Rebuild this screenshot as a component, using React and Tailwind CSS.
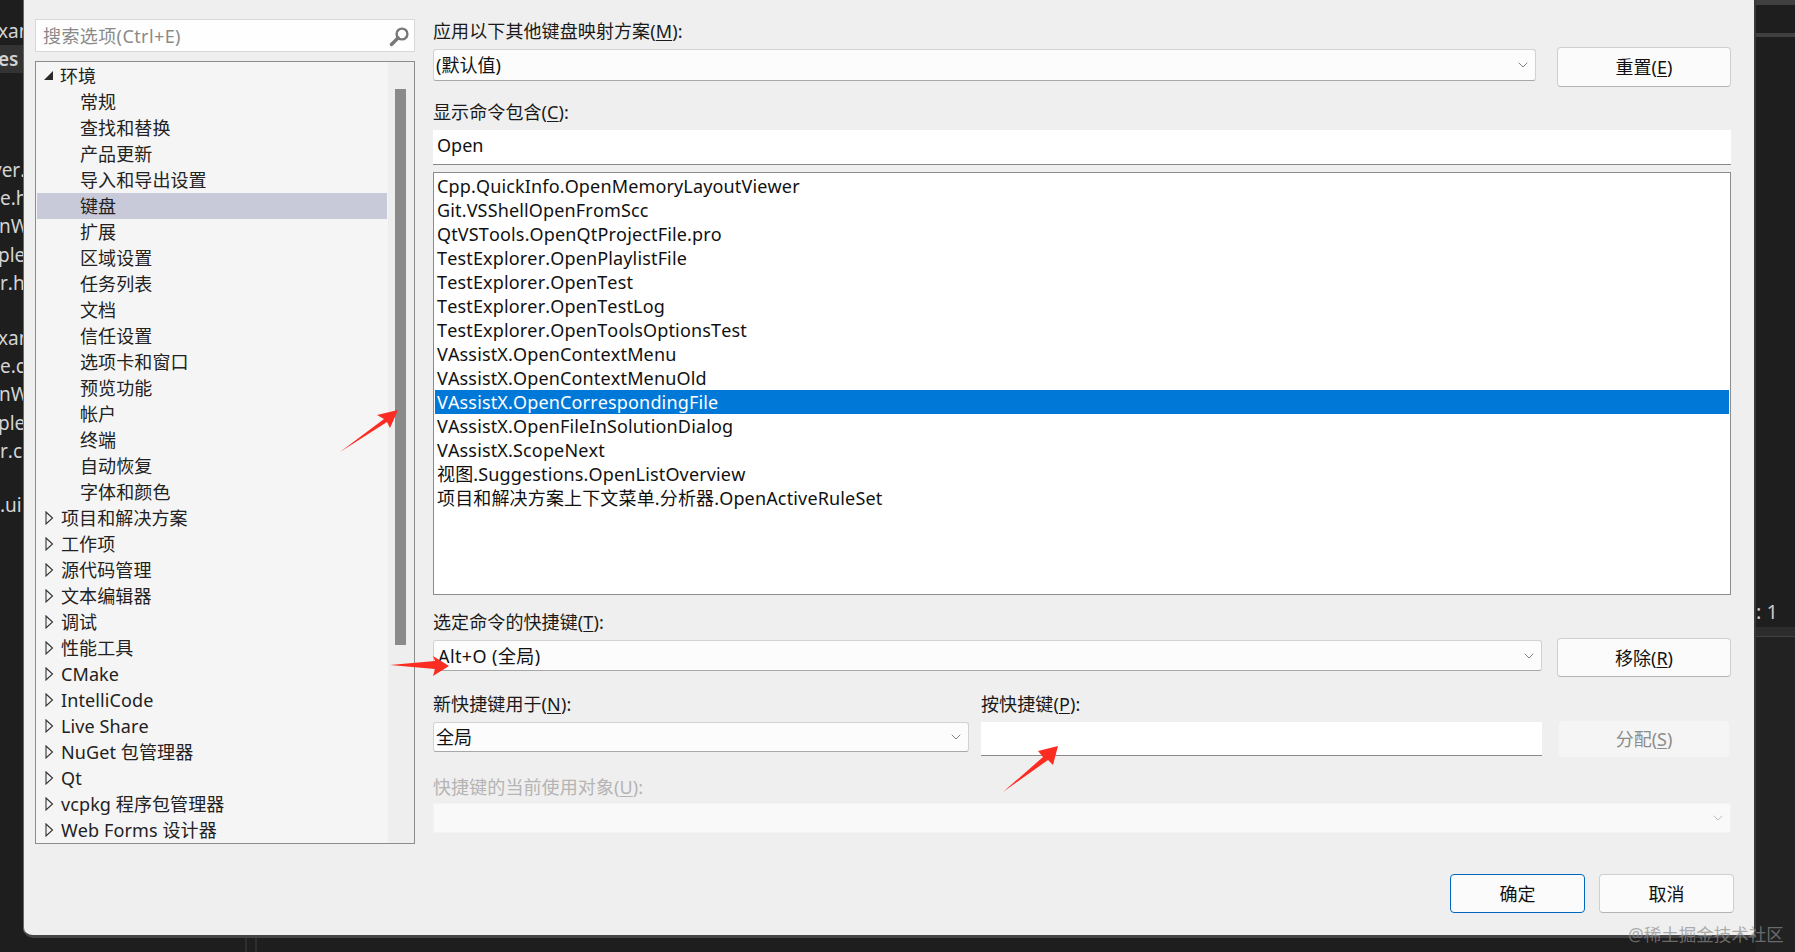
import { ChevronDown } from "lucide-react";

const treeEnv = ["常规", "查找和替换", "产品更新", "导入和导出设置", "键盘", "扩展", "区域设置", "任务列表", "文档", "信任设置", "选项卡和窗口", "预览功能", "帐户", "终端", "自动恢复", "字体和颜色"];
const treeRest = ["项目和解决方案", "工作项", "源代码管理", "文本编辑器", "调试", "性能工具", "CMake", "IntelliCode", "Live Share", "NuGet 包管理器", "Qt", "vcpkg 程序包管理器", "Web Forms 设计器"];
const commands = [
  "Cpp.QuickInfo.OpenMemoryLayoutViewer",
  "Git.VSShellOpenFromScc",
  "QtVSTools.OpenQtProjectFile.pro",
  "TestExplorer.OpenPlaylistFile",
  "TestExplorer.OpenTest",
  "TestExplorer.OpenTestLog",
  "TestExplorer.OpenToolsOptionsTest",
  "VAssistX.OpenContextMenu",
  "VAssistX.OpenContextMenuOld",
  "VAssistX.OpenCorrespondingFile",
  "VAssistX.OpenFileInSolutionDialog",
  "VAssistX.ScopeNext",
  "视图.Suggestions.OpenListOverview",
  "项目和解决方案上下文菜单.分析器.OpenActiveRuleSet",
];
// clipped file names of the editor behind the dialog
const behind = [
  { text: "xan", cls: "h-[28px] mt-[17px] -ml-[2px]" },
  { text: "es", cls: "h-[28px] -ml-[2px] bg-[#333333] font-semibold" },
  { text: "ver.", cls: "h-[28px] mt-[83px] -ml-[8px]" },
  { text: "e.h", cls: "h-[28px] ml-0" },
  { text: "nW", cls: "h-[29px] -ml-[1px]" },
  { text: "ple", cls: "h-[28px] -ml-[2px]" },
  { text: "r.h", cls: "h-[28px] ml-0" },
  { text: "xan", cls: "h-[28px] mt-[27px] -ml-[2px]" },
  { text: "e.c", cls: "h-[28px] ml-0" },
  { text: "nW", cls: "h-[29px] -ml-[1px]" },
  { text: "ple", cls: "h-[28px] -ml-[2px]" },
  { text: "r.c", cls: "h-[28px] ml-0" },
  { text: ".ui", cls: "h-[28px] mt-[26px] ml-0" },
];

const Chevron = ({ className = "text-[#555555]" }) => (
  <ChevronDown size={16} strokeWidth={1.1} className={className} />
);

const Label = ({ text, hot, after = "):", className = "text-[#1a1a1a]" }) => (
  <div className={"h-6 leading-[22px] whitespace-nowrap tracking-[0.1px] " + className}>
    {text}(<span className="underline underline-offset-2">{hot}</span>{after}
  </div>
);

const Combo = ({ value, className }) => (
  <div className={"flex items-center justify-between pl-[2px] pr-[4px] bg-[#fcfcfc] border border-[#d2d2d2] border-b-[#a8a8a8] rounded-[3px] text-[#111111] " + className}>
    <span className="whitespace-nowrap">{value}</span>
    <Chevron />
  </div>
);

const Btn = ({ children, className }) => (
  <button className={"flex items-center justify-center bg-[#fbfbfb] border border-[#cfcfcf] border-b-[#b4b4b4] rounded-[4px] text-[#111111] " + className}>
    {children}
  </button>
);

const Collapsed = () => (
  <svg width="9" height="14" viewBox="0 0 9 14" className="shrink-0">
    <path d="M1 1 L7.5 7 L1 13 Z" fill="none" stroke="#333333" strokeWidth="1.1" />
  </svg>
);

function TreeRow({ label, selected, top, children }) {
  return (
    <div className={"h-[26px] leading-[26px] flex items-center whitespace-nowrap text-[#222222] tracking-[0.1px] " + (selected ? "bg-[#c9cad9] mr-px " : "") + (top ? "pl-[8px]" : "pl-[43px]")}>
      {children}
      {top ? <span className="ml-[7px]">{label}</span> : label}
    </div>
  );
}

export default function App() {
  return (
    <div className="relative w-[1795px] h-[952px] overflow-hidden flex bg-[#1e1e1e] text-[18px] [font-kerning:none] font-['Noto_Sans','Noto_Sans_CJK_SC',sans-serif]">
      {/* editor tabs behind */}
      <div className="w-[23px] shrink-0 overflow-hidden flex flex-col text-[19px] text-[#d4d4d4]">
        {behind.map((b, i) => (
          <div key={i} className={"leading-[28px] whitespace-nowrap " + b.cls}>{b.text}</div>
        ))}
      </div>

      <div className="w-[1733px] shrink-0 flex flex-col">
        <div className="h-[938px] shrink-0 bg-[#efefef] border-l border-l-[#666666] border-r-2 border-r-[#3a3a3a] border-b-[3px] border-b-[#444444] rounded-bl-[10px] flex pl-[11px]">
          {/* left: options tree */}
          <div className="w-[380px] shrink-0 flex flex-col pt-[19px]">
            <div className="h-[33px] bg-[#fefefe] border border-[#d8d8d8] flex items-center justify-between pl-[7px] pr-[4px] pt-[2px] text-[#8a8a8a]">
              <span className="whitespace-nowrap tracking-[0.4px]">搜索选项(Ctrl+E)</span>
              <svg width="21" height="21" viewBox="0 0 21 21">
                <circle cx="13" cy="8" r="5.4" fill="none" stroke="#777777" strokeWidth="2.4" />
                <path d="M9 12 L2.5 18.5" stroke="#777777" strokeWidth="3.4" strokeLinecap="round" />
              </svg>
            </div>
            <div className="mt-[9px] h-[783px] border border-[#8c8c8c] bg-[#f5f5f5] flex overflow-hidden">
              <div className="w-[352px] shrink-0 pl-[1px] pt-[1px]">
                <TreeRow label="环境" top>
                  <svg width="9" height="14" viewBox="0 0 9 14" className="shrink-0 -ml-px">
                    <path d="M0 11 L9 11 L9 2 Z" fill="#2a2a2a" />
                  </svg>
                </TreeRow>
                {treeEnv.map((t) => (
                  <TreeRow key={t} label={t} selected={t === "键盘"} />
                ))}
                {treeRest.map((t) => (
                  <TreeRow key={t} label={t} top>
                    <Collapsed />
                  </TreeRow>
                ))}
              </div>
              <div className="flex-1 bg-[#eeeeee] pl-[7px] pt-[27px]">
                <div className="w-[11px] h-[556px] bg-[#8a8a8a]" />
              </div>
            </div>
          </div>

          {/* right: keyboard mapping */}
          <div className="w-[1298px] shrink-0 ml-[18px] flex flex-col">
            <Label text="应用以下其他键盘映射方案" hot="M" className="mt-5 text-[#1a1a1a]" />
            <div className="mt-[3px] flex gap-[21px]">
              <Combo value="(默认值)" className="flex-1 mt-[2px] h-8" />
              <Btn className="w-[174px] h-10">重置(<span className="underline underline-offset-2">E</span>)</Btn>
            </div>
            <Label text="显示命令包含" hot="C" className="mt-[14px] text-[#1a1a1a]" />
            <div className="mt-[5px] h-[35px] bg-white border-b border-b-[#8a8a8a] pl-1 leading-[30px] text-[#111111]">Open</div>
            <div className="mt-[7px] h-[423px] bg-white border border-[#8c8c8c] pt-[1px]">
              {commands.map((c) => (
                <div key={c} className={"h-6 leading-6 pl-[2px] mx-px whitespace-nowrap tracking-[0.15px] " + (c === "VAssistX.OpenCorrespondingFile" ? "bg-[#0078d7] text-white" : "text-[#111111]")}>
                  {c}
                </div>
              ))}
            </div>
            <Label text="选定命令的快捷键" hot="T" className="mt-4 text-[#1a1a1a]" />
            <div className="mt-[3px] flex gap-[15px]">
              <Combo value={<span className="ml-[2px] tracking-[0.4px] relative top-px">Alt+O (全局)</span>} className="flex-1 mt-[2px] h-[31px]" />
              <Btn className="w-[174px] h-[39px] pt-[2px]">移除(<span className="underline underline-offset-2">R</span>)</Btn>
            </div>
            <div className="mt-[16px] flex">
              <Label text="新快捷键用于" hot="N" className="w-[548px] text-[#1a1a1a]" />
              <Label text="按快捷键" hot="P" className="text-[#1a1a1a]" />
            </div>
            <div className="mt-[3px] flex items-start">
              <Combo value="全局" className="w-[536px] mt-[2px] h-[30px]" />
              <div className="flex-1 ml-3 mt-[2px] h-[34px] bg-white border-b border-b-[#8a8a8a]" />
              <Btn className="ml-4 mr-px w-[172px] h-[38px] !bg-[#f5f5f5] !border-[#f0f0f0] !text-[#8c8c8c]">
                分配(<span className="underline underline-offset-2">S</span>)
              </Btn>
            </div>
            <Label text="快捷键的当前使用对象" hot="U" className="mt-[18px] text-[#b4b4b4]" />
            <div className="mt-[3px] h-[30px] bg-[#f9f9f9] border border-[#f3f3f3] rounded-[2px] flex items-center justify-end pr-[4px]">
              <Chevron className="text-[#aaaaaa]" />
            </div>
            <div className="mt-[41px] -mr-[3px] flex justify-end gap-[14px]">
              <Btn className="w-[135px] h-[39px] pt-[2px] !border-[#0067c0] !border-b-[#0067c0]">确定</Btn>
              <Btn className="w-[135px] h-[39px] pt-[2px]">取消</Btn>
            </div>
          </div>
        </div>
        {/* editor gutter lines under the dialog */}
        <div className="flex-1 flex pl-[222px] gap-[8px]">
          <div className="w-[2px] bg-[#2e2e2e]" />
          <div className="w-[2px] bg-[#2e2e2e]" />
        </div>
      </div>

      {/* right sliver of the editor */}
      <div className="flex-1 flex flex-col text-[#c8c8c8]">
        <div className="h-[5px] bg-[#404040]" />
        <div className="mt-[28px] h-[4px] bg-[#404040]" />
        <div className="mt-[563px] h-[24px] leading-[24px] text-[20px] whitespace-nowrap">: 1</div>
        <div className="mt-[3px] h-[10px] bg-[#2c2c2c] border-b border-b-[#404040]" />
        <div className="flex-1 bg-[#222222]" />
      </div>

      {/* red annotation arrows */}
      <svg className="absolute left-0 top-0 pointer-events-none" width="1795" height="952">
        <path d="M340 452 L384 419 L377 415 L398 410 L390 428 L387 422 Z" fill="#fb2c22" />
        <path d="M390 665 L435 661 L433 656 L449 666 L433 676 L435 669 Z" fill="#fb2c22" />
        <path d="M1003 792 L1043 757 L1038 751 L1058 746 L1053 765 L1048 760 Z" fill="#fb2c22" />
      </svg>

      {/* watermark */}
      <div className="absolute left-[1628px] top-[922px] leading-6 text-[17.5px] whitespace-nowrap text-[#8c8c8c]/70">@稀土掘金技术社区</div>
    </div>
  );
}
